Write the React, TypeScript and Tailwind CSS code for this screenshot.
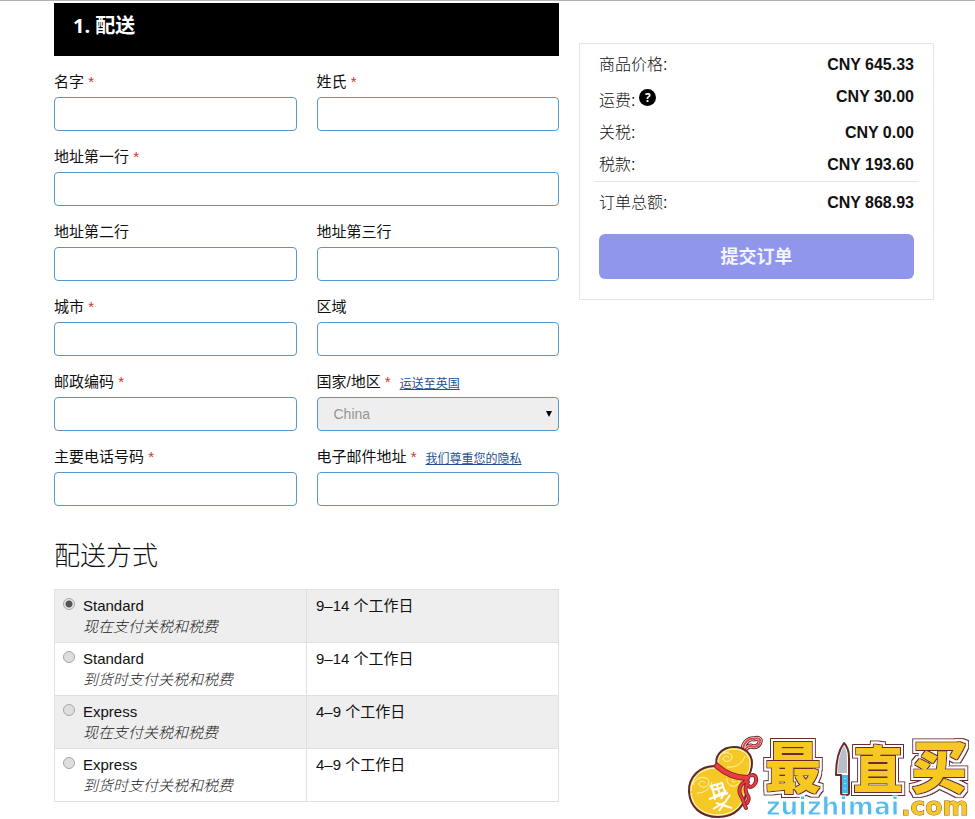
import React from 'react';

const fields = [
  { id: 'first-name', label: '名字', required: true },
  { id: 'last-name', label: '姓氏', required: true },
  { id: 'address-1', label: '地址第一行', required: true, wide: true },
  { id: 'address-2', label: '地址第二行' },
  { id: 'address-3', label: '地址第三行' },
  { id: 'city', label: '城市', required: true },
  { id: 'region', label: '区域' },
  { id: 'postcode', label: '邮政编码', required: true },
  { id: 'country', label: '国家/地区', required: true, link: '运送至英国', select: true },
  { id: 'phone', label: '主要电话号码', required: true },
  { id: 'email', label: '电子邮件地址', required: true, link: '我们尊重您的隐私' },
];

const methods = [
  { id: 'standard-now', name: 'Standard', note: '现在支付关税和税费', time: '9–14 个工作日' },
  { id: 'standard-later', name: 'Standard', note: '到货时支付关税和税费', time: '9–14 个工作日' },
  { id: 'express-now', name: 'Express', note: '现在支付关税和税费', time: '4–9 个工作日' },
  { id: 'express-later', name: 'Express', note: '到货时支付关税和税费', time: '4–9 个工作日' },
];

function Field({ field }: { field: (typeof fields)[number] }) {
  return (
    <div className={field.wide ? 'col-span-2' : ''}>
      <div className="flex h-5 items-center text-[15px] leading-5 whitespace-nowrap">
        <label htmlFor={field.id}>
          {field.label}
          {field.required && <span className="text-[#d0342c]"> *</span>}
        </label>
        {field.link && (
          <a href="#" className="ml-[9px] pt-1 text-xs leading-4 text-[#1d5091] underline">
            {field.link}
          </a>
        )}
      </div>
      {field.select ? (
        <div className="relative mt-[5px]">
          <select
            id={field.id}
            disabled
            className="block h-[34px] w-full appearance-none rounded border border-[#5897c9] bg-[#eeeeee] px-4 text-sm text-[#959595] opacity-100"
          >
            <option>China</option>
          </select>
          <svg viewBox="0 0 6 6" className="pointer-events-none absolute top-[14px] right-[7px] h-[6px] w-[6px]">
            <path d="M0 0h6L3 6z" fill="#000" />
          </svg>
        </div>
      ) : (
        <input
          id={field.id}
          type="text"
          className="mt-[5px] block h-[34px] w-full rounded border border-[#5897c9] bg-white px-4 text-sm outline-none"
        />
      )}
    </div>
  );
}

function ShippingMethods() {
  return (
    <table className="w-full table-fixed border-collapse border border-[#e0e0e0] text-[15px] leading-[21px]">
      <tbody>
        {methods.map((method, i) => (
          <tr key={method.id} className="odd:bg-[#eeeeee]">
            <td className="border border-[#e0e0e0] px-2 py-[5px] align-top">
              <div className="flex gap-2">
                <input
                  type="radio"
                  name="shipping-method"
                  id={method.id}
                  defaultChecked={i === 0}
                  className="mt-[3px] h-3 w-3 shrink-0 appearance-none rounded-full border border-[#a6a6a6] bg-[#dedede] checked:bg-[radial-gradient(circle,#555_0,#555_3px,#e8e8e8_4px)]"
                />
                <label htmlFor={method.id}>
                  <span className="block">{method.name}</span>
                  <em className="block font-light text-[#222222]">{method.note}</em>
                </label>
              </div>
            </td>
            <td className="border border-[#e0e0e0] px-[9px] py-[5px] align-top">{method.time}</td>
          </tr>
        ))}
      </tbody>
    </table>
  );
}

function OrderSummary() {
  return (
    <aside className="mt-10 w-[355px] shrink-0 border border-[#e6e6e6] px-[14px] pt-[5px] pb-5 text-base leading-8">
      <dl className="px-[5px]">
        <div className="flex justify-between">
          <dt className="font-light">商品价格:</dt>
          <dd className="font-bold">CNY 645.33</dd>
        </div>
        <div className="flex justify-between">
          <dt className="flex items-center gap-1 font-light">
            <span className="pt-1">运费:</span>
            <button
              type="button"
              aria-label="运费"
              className="mb-[3px] h-[17px] w-[17px] rounded-full bg-black text-center font-['Open_Sans'] text-xs leading-[17px] font-bold text-white"
            >
              ?
            </button>
          </dt>
          <dd className="font-bold">CNY 30.00</dd>
        </div>
        <div className="flex justify-between">
          <dt className="font-light">关税:</dt>
          <dd className="font-bold">CNY 0.00</dd>
        </div>
        <div className="flex justify-between">
          <dt className="font-light">税款:</dt>
          <dd className="font-bold">CNY 193.60</dd>
        </div>
      </dl>
      <dl className="border-t border-[#e6e6e6] px-[5px] pt-[5px]">
        <div className="flex justify-between">
          <dt className="font-light">订单总额:</dt>
          <dd className="font-bold">CNY 868.93</dd>
        </div>
      </dl>
      <div className="px-[5px] pt-[15px]">
        <button type="button" className="block h-[45px] w-full rounded-md bg-[#9196ed] text-lg font-bold text-[#f4f4ff]">
          提交订单
        </button>
      </div>
    </aside>
  );
}

const ribbon =
  'M746 779c3-5 9-5 10-1 1 5-3 9-6 9-3-1-3-5-4-8zM746 781c-7 4-8 10-5 15 3 4 2 7 5 12M748 782c-4 6-3 10 0 14 2 3 0 5-1 7';
const stem = 'M743 749c1-7 6-11 11-10 4-2 7 0 6 3-1 4-5 6-9 4-3 0-5 2-6 4';

function Watermark() {
  return (
    <svg viewBox="684 704 291 115" className="pointer-events-none fixed right-0 bottom-0 h-[115px] w-[291px]">
      <defs>
        {/* maroon / white / maroon rings around the characters */}
        <filter id="rings" x="-10%" y="-10%" width="120%" height="120%">
          <feMorphology in="SourceAlpha" operator="dilate" radius="4" result="r3" />
          <feMorphology in="SourceAlpha" operator="dilate" radius="3" result="r2" />
          <feMorphology in="SourceAlpha" operator="dilate" radius="1" result="r1" />
          <feFlood floodColor="#6b2a30" result="maroon" />
          <feFlood floodColor="#ffffff" result="white" />
          <feComposite in="maroon" in2="r3" operator="in" result="c3" />
          <feComposite in="white" in2="r2" operator="in" result="c2" />
          <feComposite in="maroon" in2="r1" operator="in" result="c1" />
          <feMerge>
            <feMergeNode in="c3" />
            <feMergeNode in="c2" />
            <feMergeNode in="c1" />
            <feMergeNode in="SourceGraphic" />
          </feMerge>
        </filter>
      </defs>

      {/* gourd */}
      <g fill="none" strokeLinecap="round">
        <path d={stem} stroke="#5d2930" strokeWidth="5" />
        <path d={stem} stroke="#ffffff" strokeWidth="3" />
        <path d={stem} stroke="#ee4349" strokeWidth="2" />
      </g>
      <g stroke="#5d2930" strokeWidth="2" fill="#f5c825">
        <path d="M717 766c-17-1-29 11-28 26 1 15 12 25 29 25 18 0 28-12 28-26 0-17-11-24-29-25z" />
        <path d="M717 766c-3-9 4-19 17-19 11 0 18 7 18 16 0 7-2 11-5 15-12 0-22-5-30-12z" />
      </g>
      <g fill="none" stroke="#ffffff" strokeWidth="1">
        <path d="M691 791c0-13 10-23 25-23M691 793c1 13 12 22 27 22 15 0 25-9 26-22M718 762c0-7 7-13 16-13 9 0 16 6 16 14 0 6-1 10-4 13" />
        <path d="M719 756c4-5 13-4 13 1 0 5-8 6-9 2 0-3 5-4 6-1M727 767c9 1 16-4 18-11" stroke="#fff3b5" />
        <path d="M693 785c2-9 15-10 16-3 0 6-9 7-10 2 0-3 5-4 6-1M697 793c8 0 13-4 15-11M727 778c-1 7 6 10 10 7 4-3 2-9-3-7-3 2-1 5 1 4" stroke="#fff3b5" />
      </g>
      <path
        d="M711 786l11-3 3 9-10 4zM713 790l10-3M717 785l3 10M709 799l19-6M712 786l3 14M726 790l-5 9M730 795l-11 16M716 803l16 5M713 809l12-7"
        fill="none"
        stroke="#ffffff"
        strokeWidth="2"
      />
      <g fill="none" strokeLinecap="round" strokeLinejoin="round">
        <path d="M717 766c8 7 17 12 30 12" stroke="#8e2831" strokeWidth="6" />
        <path d={ribbon} stroke="#8e2831" strokeWidth="4" />
        <path d="M717 766c8 7 17 12 30 12" stroke="#ee3b42" strokeWidth="4" />
        <path d={ribbon} stroke="#ee3b42" strokeWidth="2" />
      </g>

      {/* wordmark */}
      <text
        x="765 853 911"
        y="788"
        fill="#f7c821"
        filter="url(#rings)"
        className="font-['Noto_Sans_CJK_SC',sans-serif] text-[56px] font-black"
      >
        最<tspan className="text-[50px]">直</tspan>买
      </text>

      {/* knife */}
      <path d="M844 743c-6 8-8 20-8 32h5v18c0 3 8 3 8 0v-35c0-7-2-12-5-15z" fill="#ffffff" stroke="#6b2a30" strokeWidth="2" strokeLinejoin="round" />
      <path d="M844 746c-5 8-6 18-6 27h9v-15c0-5-1-9-3-12z" fill="#b9bec8" />
      <path d="M842 775h6v18h-6z" fill="#44b8e8" />
      <path d="M845 778v1M845 783v1M845 788v1" stroke="#ffffff" strokeWidth="1" />

      <g className="font-['DejaVu_Sans',sans-serif] text-[25px] font-bold">
        <text x="766" y="815" fill="#55bdec" stroke="#ffffff" strokeWidth="1">
          zuizhimai
        </text>
        <text x="901" y="815" fill="#f5c825" stroke="#8f5a2a" strokeWidth="1" paintOrder="stroke">
          .com
        </text>
      </g>
    </svg>
  );
}

export default function App() {
  return (
    <div className="border-t border-[#b3b3b3] bg-white pt-[2px] pr-[41px] pl-[54px] font-['Liberation_Sans','Noto_Sans_CJK_SC',sans-serif] text-[#111111]">
      <div className="flex items-start gap-5">
        <main className="min-w-0 flex-1">
          <h1 className="bg-black px-[19px] pt-[9px] pb-4 font-['Open_Sans','Noto_Sans_CJK_SC',sans-serif] text-xl leading-7 font-bold text-white">
            1. 配送
          </h1>
          <form className="mt-4 grid grid-cols-2 gap-x-5 gap-y-4">
            {fields.map((field) => (
              <Field key={field.id} field={field} />
            ))}
          </form>
          <h2 className="mt-8 mb-[15px] text-[26px] leading-9 font-light">配送方式</h2>
          <ShippingMethods />
        </main>
        <OrderSummary />
      </div>
      <Watermark />
    </div>
  );
}
